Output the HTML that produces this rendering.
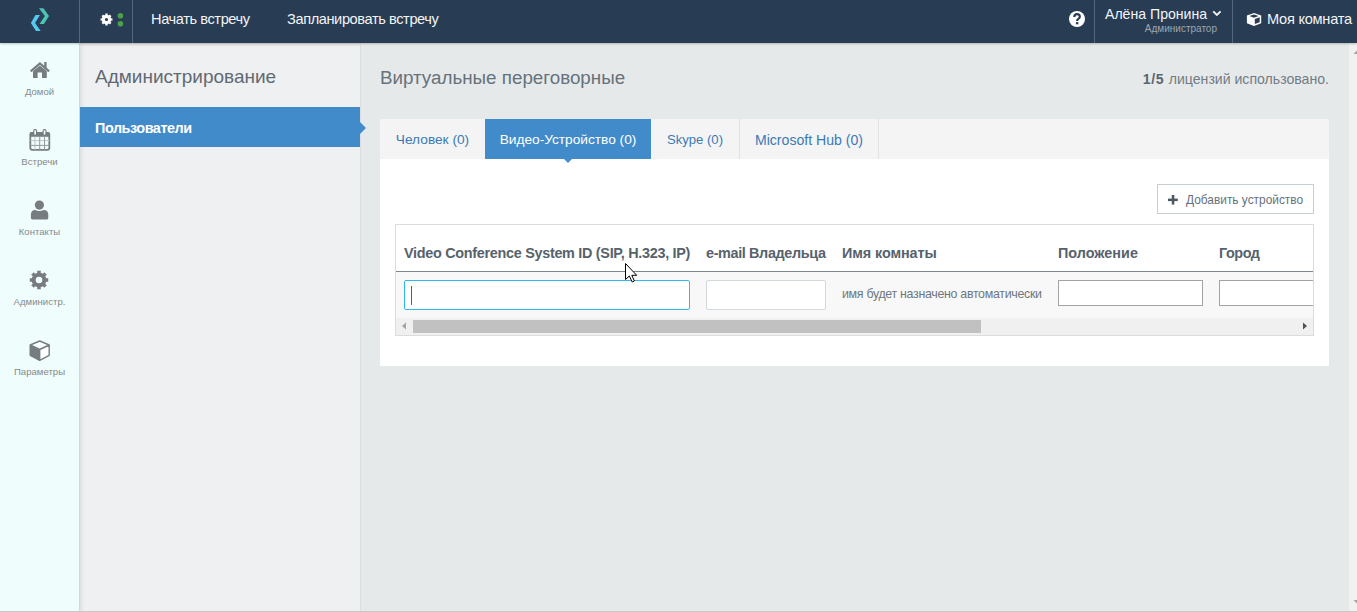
<!DOCTYPE html>
<html><head><meta charset="utf-8">
<style>
*{box-sizing:border-box;margin:0;padding:0}
html,body{width:1357px;height:612px;overflow:hidden;font-family:"Liberation Sans",sans-serif;background:#e6e9ea}
.abs{position:absolute}
svg{position:absolute;overflow:visible}
#hdr{position:absolute;left:0;top:0;width:1357px;height:43px;background:#283c54;z-index:5;box-shadow:0 1px 2px rgba(0,0,0,0.22)}
.vsep{position:absolute;top:0;width:1px;height:43px;background:#56667a}
.htxt{position:absolute;color:#f2f4f6;font-size:14.6px;letter-spacing:-0.4px;white-space:nowrap;top:10.6px}
#side{position:absolute;left:0;top:43px;width:80px;height:569px;background:#effdfd;border-right:1px solid #cfd9da}
.slbl{position:absolute;left:0;width:79px;text-align:center;color:#858a8e;font-size:9.6px;white-space:nowrap}
#adm{position:absolute;left:80px;top:43px;width:281px;height:569px;background:#eff0f1;border-right:1px solid #dcdfe0;box-shadow:inset 3px 3px 4px -2px rgba(0,0,0,0.10)}
#main{position:absolute;left:361px;top:43px;width:988px;height:569px;background:#e6e9ea}
#vscroll{position:absolute;left:1349px;top:43px;width:8px;height:569px;background:#f1f1f1}
.tab{position:absolute;top:119px;height:40px;font-size:13.7px;color:#3b7ab6;white-space:nowrap;padding-top:13px;text-align:center}
.th{position:absolute;top:245px;font-size:14.4px;font-weight:bold;color:#56626c;white-space:nowrap}
.inp{position:absolute;background:#fff;border:1px solid #cfd3d6}
</style></head>
<body>
<div id="hdr">
  <svg style="left:0;top:0" width="80" height="43" viewBox="0 0 80 43">
    <polygon points="38.97,8.2 43.4,8.2 49,16 43.9,23.9 39.5,23.9 44.85,16" fill="#4ec4b2"/>
    <polygon points="39.95,15.05 35.5,15.05 30.9,23.1 36,31 40.7,31 35.05,23.1" fill="#55c9f2"/>
  </svg>
  <div class="vsep" style="left:79px"></div>
  <svg style="left:99.5px;top:13.4px" width="13" height="13" viewBox="0 0 14 14">
    <path fill="#ffffff" fill-rule="evenodd" d="M5.84 1.93 L5.73 0.62 L8.27 0.62 L8.16 1.93 L9.76 2.59 L10.61 1.60 L12.40 3.39 L11.41 4.24 L12.07 5.84 L13.38 5.73 L13.38 8.27 L12.07 8.16 L11.41 9.76 L12.40 10.61 L10.61 12.40 L9.76 11.41 L8.16 12.07 L8.27 13.38 L5.73 13.38 L5.84 12.07 L4.24 11.41 L3.39 12.40 L1.60 10.61 L2.59 9.76 L1.93 8.16 L0.62 8.27 L0.62 5.73 L1.93 5.84 L2.59 4.24 L1.60 3.39 L3.39 1.60 L4.24 2.59Z M8.70 7.00 A1.7 1.7 0 1 0 5.30 7.00 A1.7 1.7 0 1 0 8.70 7.00Z"/>
  </svg>
  <svg style="left:115px;top:10px" width="12" height="20" viewBox="0 0 12 20">
    <circle cx="5.4" cy="5.8" r="2.8" fill="#49a148"/>
    <circle cx="5.4" cy="13.7" r="2.8" fill="#49a148"/>
  </svg>
  <div class="vsep" style="left:132px"></div>
  <div class="htxt" style="left:151px">Начать встречу</div>
  <div class="htxt" style="left:287px">Запланировать встречу</div>

  <svg style="left:1069px;top:10.5px" width="16" height="16" viewBox="0 0 16 16">
    <circle cx="8" cy="8" r="8" fill="#fff"/>
    <path d="M5.3 5.9 Q5.3 3.2 8 3.2 Q10.8 3.2 10.8 5.7 Q10.8 7.1 9.3 7.9 Q8.1 8.5 8.1 9.9" fill="none" stroke="#283c54" stroke-width="2.2"/>
    <rect x="6.9" y="11.1" width="2.4" height="2.2" fill="#283c54"/>
  </svg>
  <div class="vsep" style="left:1094px"></div>
  <div class="abs" style="left:1105px;top:6px;font-size:14.1px;color:#f2f4f6;white-space:nowrap">Алёна Пронина</div>
  <svg style="left:1212px;top:10px" width="10" height="7" viewBox="0 0 10 7">
    <polyline points="1.2,1.3 4.9,5 8.6,1.3" fill="none" stroke="#f2f4f6" stroke-width="1.9"/>
  </svg>
  <div class="abs" style="left:1100px;width:117px;top:23px;font-size:10px;color:#9ba6b1;white-space:nowrap;text-align:right">Администратор</div>
  <div class="vsep" style="left:1232px"></div>
  <svg style="left:1246px;top:12px" width="16" height="15" viewBox="0 0 16 15">
    <path fill="#fff" fill-rule="evenodd" d="M8 0.9 L15.2 3.6 L15.2 11.3 L8 14 L0.9 11.3 L0.9 3.6 Z M8 2.5 L3.4 4.1 L8 5.8 L12.6 4.1 Z M8.8 7.1 L8.8 12 L13.7 10.2 L13.7 5.3 Z"/>
  </svg>
  <div class="htxt" style="left:1267px;font-size:14.6px;letter-spacing:-0.25px;top:10.5px">Моя комната</div>
</div>

<div id="side">
  <svg style="left:30px;top:19px" width="20" height="16" viewBox="0 0 20 16">
    <rect x="14.2" y="0" width="2.4" height="6.5" fill="#767c80"/>
    <polyline points="0.7,9.4 9.9,1.4 19.1,9.4" fill="none" stroke="#767c80" stroke-width="2.2"/>
    <path fill="#767c80" d="M3 16 L3 9.3 L9.9 3.6 L16.8 9.3 L16.8 16 L12 16 L12 10.6 L7.6 10.6 L7.6 16 Z"/>
  </svg>
  <div class="slbl" style="top:43px">Домой</div>
  <svg style="left:29px;top:86px" width="22" height="23" viewBox="0 0 22 23">
    <rect x="1.3" y="3.8" width="19" height="17" rx="1.8" fill="none" stroke="#767c80" stroke-width="1.8"/>
    <rect x="1" y="3.3" width="19.6" height="4.5" fill="#767c80"/>
    <rect x="4.2" y="0" width="3.9" height="6.3" rx="1.7" fill="#767c80"/>
    <rect x="13.6" y="0" width="3.9" height="6.3" rx="1.7" fill="#767c80"/>
    <rect x="5.3" y="1.3" width="1.7" height="4.2" fill="#effdfd"/>
    <rect x="14.7" y="1.3" width="1.7" height="4.2" fill="#effdfd"/>
    <rect x="5.4" y="7.8" width="1" height="13" fill="#c3c7c9"/>
    <rect x="1.5" y="11.1" width="19" height="1" fill="#c3c7c9"/>
    <g fill="#959a9d">
      <rect x="10.2" y="7.8" width="1" height="13"/>
      <rect x="15" y="7.8" width="1" height="13"/>
      <rect x="1.5" y="15.9" width="19" height="1"/>
    </g>
  </svg>
  <div class="slbl" style="top:113px">Встречи</div>
  <svg style="left:30px;top:157px" width="19" height="20" viewBox="0 0 19 20">
    <path fill="#767c80" d="M0.9 18 L0.9 14.6 Q0.9 9.9 5.2 9.9 Q7 11 9.4 11 Q11.8 11 13.6 9.9 Q18.3 9.9 18.3 14.6 L18.3 18 Q18.3 19.4 16.9 19.4 L2.3 19.4 Q0.9 19.4 0.9 18 Z"/>
    <circle cx="9.4" cy="5.1" r="5.3" fill="#effdfd"/>
    <circle cx="9.4" cy="5.1" r="4.6" fill="#767c80"/>
  </svg>
  <div class="slbl" style="top:183px">Контакты</div>
  <svg style="left:29.3px;top:227px" width="20" height="20" viewBox="0 0 20 20">
    <path fill="#767c80" fill-rule="evenodd" d="M8.34 2.79 L8.17 0.78 L11.83 0.78 L11.66 2.79 L13.93 3.73 L15.22 2.18 L17.82 4.78 L16.27 6.07 L17.21 8.34 L19.22 8.17 L19.22 11.83 L17.21 11.66 L16.27 13.93 L17.82 15.22 L15.22 17.82 L13.93 16.27 L11.66 17.21 L11.83 19.22 L8.17 19.22 L8.34 17.21 L6.07 16.27 L4.78 17.82 L2.18 15.22 L3.73 13.93 L2.79 11.66 L0.78 11.83 L0.78 8.17 L2.79 8.34 L3.73 6.07 L2.18 4.78 L4.78 2.18 L6.07 3.73Z M13.30 10.00 A3.3 3.3 0 1 0 6.70 10.00 A3.3 3.3 0 1 0 13.30 10.00Z"/>
  </svg>
  <div class="slbl" style="top:253px">Администр.</div>
  <svg style="left:29px;top:297px" width="22" height="22" viewBox="0 0 22 22">
    <path fill="#fff" stroke="#767c80" stroke-width="1.4" stroke-linejoin="round" d="M10.7 1 L20.2 5 L20.2 15.3 L10.7 20.4 L1.2 15.3 L1.2 5 Z M1.2 5 L10.7 9.5 L20.2 5 M10.7 9.5 L10.7 20.4"/>
    <path fill="#767c80" d="M1.2 5 L10.7 9.5 L10.7 20.4 L1.2 15.3 Z"/>
  </svg>
  <div class="slbl" style="top:323px">Параметры</div>
</div>

<div id="adm">
  <div class="abs" style="left:15px;top:23px;font-size:19px;color:#5f6a73;white-space:nowrap">Администрирование</div>
  <div class="abs" style="left:0;top:64px;width:280px;height:40px;background:#428bca"></div>
  <div class="abs" style="left:15px;top:76.5px;font-size:14.4px;letter-spacing:-0.45px;font-weight:bold;color:#fff;white-space:nowrap">Пользователи</div>
</div>
<div id="main"></div>
<div class="abs" style="left:360px;top:122px;width:0;height:0;border-left:6px solid #428bca;border-top:6.5px solid transparent;border-bottom:6.5px solid transparent"></div>
<div class="abs" style="left:380px;top:67px;font-size:18.8px;color:#66727b;white-space:nowrap">Виртуальные переговорные</div>
<div class="abs" style="left:1000px;width:329px;top:71px;font-size:14.1px;color:#717c84;white-space:nowrap;text-align:right"><b style="color:#5a666f;letter-spacing:0.7px;margin-right:0.5px">1/5</b> лицензий использовано.</div>
<div class="abs" style="left:380px;top:119px;width:949px;height:40px;background:#f4f4f4"></div>
<div class="tab" style="left:380px;width:105px">Человек (0)</div>
<div class="tab" style="left:485px;width:166px;background:#428bca;color:#fff">Видео-Устройство (0)</div>
<div class="tab" style="left:651px;width:89px;border-right:1px solid #e2e2e2;font-size:13.1px;padding-top:13px">Skype (0)</div>
<div class="tab" style="left:740px;width:139px;border-right:1px solid #e2e2e2;font-size:14.1px">Microsoft Hub (0)</div>
<div class="abs" style="left:380px;top:159px;width:949px;height:207px;background:#fff"></div>
<div class="abs" style="left:564px;top:159px;width:0;height:0;border-top:4px solid #428bca;border-left:4px solid transparent;border-right:4px solid transparent"></div>

<div class="abs" style="left:1157px;top:184px;width:157px;height:30px;border:1px solid #c8cfd3;background:#fff"></div>
<svg style="left:1168px;top:195px" width="10" height="10" viewBox="0 0 10 10">
  <rect x="3.8" y="0" width="2.5" height="9.6" fill="#4a5863"/>
  <rect x="0" y="3.6" width="9.8" height="2.5" fill="#4a5863"/>
</svg>
<div class="abs" style="left:1186px;top:193px;font-size:11.9px;color:#65717a;white-space:nowrap">Добавить устройство</div>

<div class="abs" style="left:395px;top:224px;width:919px;height:112px;border:1px solid #dcdcdc;background:#fff"></div>
<div class="abs" style="left:396px;top:271px;width:917px;height:1px;background:#7c8891"></div>
<div class="abs" style="left:396px;top:272px;width:917px;height:46px;background:#f8f8f8"></div>
<div class="abs" style="left:396px;top:318px;width:917px;height:17px;background:#f0f0f0"></div>
<div class="abs" style="left:413px;top:320px;width:568px;height:13px;background:#c1c1c1"></div>
<svg style="left:400px;top:321px" width="8" height="10" viewBox="0 0 8 10"><polygon points="2,5 6,1.5 6,8.5" fill="#a3a3a3"/></svg>
<svg style="left:1301px;top:321px" width="8" height="10" viewBox="0 0 8 10"><polygon points="6,5 2,1.5 2,8.5" fill="#505050"/></svg>
<div class="th" style="left:404px;letter-spacing:-0.29px">Video Conference System ID (SIP, H.323, IP)</div>
<div class="th" style="left:706px;letter-spacing:-0.36px">e-mail Владельца</div>
<div class="th" style="left:842px;letter-spacing:-0.1px">Имя комнаты</div>
<div class="th" style="left:1058px">Положение</div>
<div class="th" style="left:1219px;letter-spacing:-0.45px">Город</div>
<div class="inp" style="left:404px;top:280px;width:286px;height:30px;border:1.5px solid #2dbbef;border-radius:2px"></div>
<div class="abs" style="left:411px;top:286px;width:1px;height:19px;background:#56616a"></div>
<div class="inp" style="left:706px;top:280px;width:120px;height:30px;border-color:#d3d9dd;border-radius:2px"></div>
<div class="abs" style="left:842px;top:286.5px;font-size:12.4px;letter-spacing:-0.3px;color:#6d777e;white-space:nowrap">имя будет назначено автоматически</div>
<div class="inp" style="left:1058px;top:280px;width:145px;height:26px;border-color:#a3a3a3"></div>
<div class="inp" style="left:1219px;top:280px;width:94px;height:26px;border-color:#a3a3a3;border-right:none"></div>

<svg style="left:625px;top:263px" width="14" height="21" viewBox="0 0 14 21"><polygon points="0.5,0.5 0.5,16.5 4.3,13 7.2,19 9.4,18 6.8,12.3 11.7,12.3" fill="#fff" stroke="#000" stroke-width="1" stroke-linejoin="miter"/></svg>
<div id="vscroll"></div>
<svg style="left:1349px;top:48px" width="8" height="8" viewBox="0 0 8 8"><polygon points="8.5,2 4.5,6 12.5,6" fill="#a3a3a3"/></svg>
<svg style="left:1349px;top:598px" width="8" height="8" viewBox="0 0 8 8"><polygon points="8.5,6 4.5,2 12.5,2" fill="#a3a3a3"/></svg>
<div class="abs" style="left:0;top:611px;width:1357px;height:1px;background:#c8c8c8"></div>
</body></html>
